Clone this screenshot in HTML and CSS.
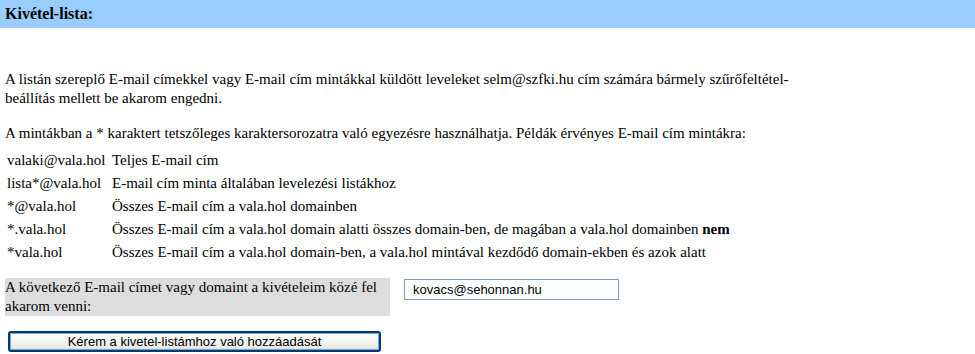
FILE: index.html
```html
<!DOCTYPE html>
<html lang="hu">
<head>
<meta charset="utf-8">
<title>Kivétel-lista</title>
<link rel="stylesheet" href="styles.css">
</head>
<body>
<div class="header">Kivétel-lista:</div>
<div class="content">
  <p class="intro">A listán szereplő E-mail címekkel vagy E-mail cím mintákkal küldött leveleket selm@szfki.hu cím számára bármely szűrőfeltétel-beállítás mellett be akarom engedni.</p>
  <p class="hint">A mintákban a * karaktert tetszőleges karaktersorozatra való egyezésre használhatja. Példák érvényes E-mail cím mintákra:</p>
  <table class="examples">
    <tr><td class="pat">valaki@vala.hol</td><td>Teljes E-mail cím</td></tr>
    <tr><td class="pat">lista*@vala.hol</td><td>E-mail cím minta általában levelezési listákhoz</td></tr>
    <tr><td class="pat">*@vala.hol</td><td>Összes E-mail cím a vala.hol domainben</td></tr>
    <tr><td class="pat">*.vala.hol</td><td>Összes E-mail cím a vala.hol domain alatti összes domain-ben, de magában a vala.hol domainben <b>nem</b></td></tr>
    <tr><td class="pat">*vala.hol</td><td>Összes E-mail cím a vala.hol domain-ben, a vala.hol mintával kezdődő domain-ekben és azok alatt</td></tr>
  </table>
  <div class="form-row">
    <div class="label">A következő E-mail címet vagy domaint a kivételeim közé fel akarom venni:</div>
    <input class="addr" type="text" value="kovacs@sehonnan.hu">
  </div>
  <div class="btn-row">
    <button class="btn" type="button">Kérem a kivetel-listámhoz való hozzáadását</button>
  </div>
</div>
</body>
</html>
```

FILE: styles.css
```css
html, body {
  margin: 0;
  padding: 0;
  background: #ffffff;
}
body {
  font-family: "Liberation Serif", "Times New Roman", serif;
  font-size: 15px;
  line-height: 19px;
  color: #000;
}
.header {
  background: #99ccff;
  height: 28px;
  line-height: 28px;
  padding-left: 5px;
  font-weight: bold;
  font-size: 16px;
}
.content {
  padding: 0 5px;
  width: 820px;
}
.intro {
  margin: 42px 0 16px 0;
}
.hint {
  margin: 16px 0 6px 0;
}
.examples {
  border-collapse: collapse;
  margin: 0;
}
.examples td {
  height: 23px;
  padding: 0 2px;
  vertical-align: middle;
  white-space: nowrap;
}
.examples td.pat {
  width: 101px;
}
.form-row {
  display: flex;
  align-items: flex-start;
  margin-top: 14px;
  gap: 14px;
}
.label {
  background: #dddddd;
  width: 385px;
}
.addr {
  width: 215px;
  height: 21px;
  box-sizing: border-box;
  margin-top: 1px;
  border: 1px solid #7f9db9;
  padding: 0 0 0 8px;
  font-family: "Liberation Sans", Arial, sans-serif;
  font-size: 13px;
  color: #000;
  background: #fff;
}
.btn-row {
  margin-top: 15px;
  padding-left: 3px;
}
.btn {
  width: 373px;
  height: 21px;
  border: 2px solid #003c74;
  border-radius: 3px;
  background: linear-gradient(#ffffff, #ecebe6 85%, #d6d0c5);
  font-family: "Liberation Sans", Arial, sans-serif;
  font-size: 13px;
  color: #000;
  padding: 0;
  box-shadow: inset 0 0 0 1px #7ba8d4;
}
```
